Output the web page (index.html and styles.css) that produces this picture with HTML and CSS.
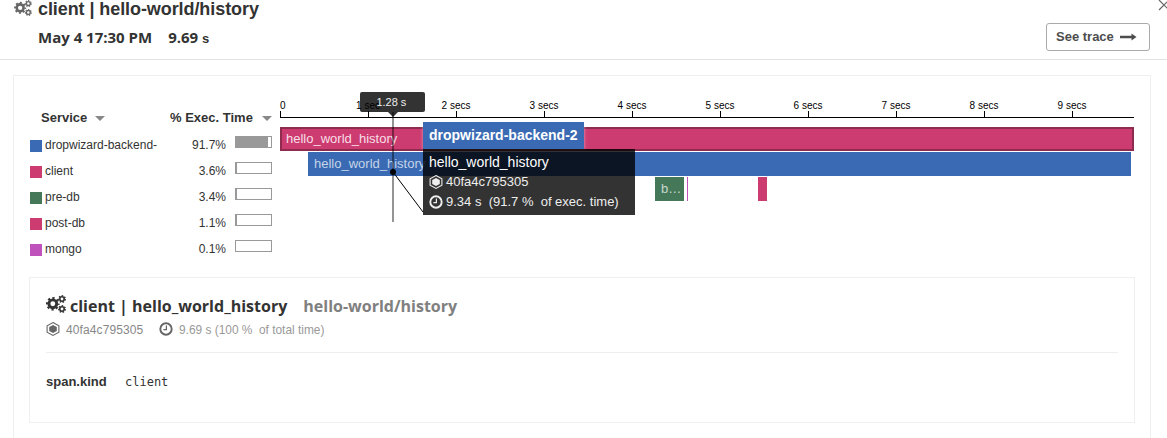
FILE: index.html
```html
<!DOCTYPE html>
<html lang="en">
<head>
<meta charset="utf-8">
<title>client | hello-world/history</title>
<link rel="stylesheet" href="styles.css">
</head>
<body>
<svg class="defs" width="0" height="0">
  <symbol id="gears" viewBox="0 0 20 18">
    <g fill="none" stroke="currentColor">
      <circle cx="6.8" cy="8.8" r="3.9" stroke-width="2.9"/>
      <circle cx="6.8" cy="8.8" r="5.8" stroke-width="2" stroke-dasharray="2.3 2.255" stroke-dashoffset="1.15"/>
      <circle cx="16" cy="4" r="2.2" stroke-width="1.6"/>
      <circle cx="16" cy="4" r="3.3" stroke-width="1.3" stroke-dasharray="1.5 1.462"/>
      <circle cx="16" cy="14" r="2.2" stroke-width="1.6"/>
      <circle cx="16" cy="14" r="3.3" stroke-width="1.3" stroke-dasharray="1.5 1.462"/>
    </g>
  </symbol>
  <symbol id="host" viewBox="0 0 14 14">
    <path d="M7 .6 12.9 3.8v6.4L7 13.4 1.1 10.2V3.8Z" fill="none" stroke="currentColor" stroke-width="1.1"/>
    <path d="M7 2.9 10.8 5v4L7 11.1 3.2 9V5Z" fill="currentColor"/>
  </symbol>
  <symbol id="clock" viewBox="0 0 14 14">
    <circle cx="7" cy="7" r="5.7" fill="none" stroke="currentColor" stroke-width="1.9"/>
    <path d="M7.4 3.6v4H4.4" fill="none" stroke="currentColor" stroke-width="1.2"/>
  </symbol>
</svg>

<header class="header">
  <svg class="header-icon"><use href="#gears"/></svg>
  <div class="header-text">
    <h1 class="title">client | hello-world/history</h1>
    <div class="subtitle"><span class="date">May 4 17:30 PM</span><span class="total">9.69 <small>s</small></span></div>
  </div>
  <button class="trace-button"><span>See trace</span>
    <svg width="17" height="8" viewBox="0 0 17 8"><path d="M0 2.8h11.5V.5L16.5 4l-5 3.5V5.2H0Z" fill="currentColor"/></svg>
  </button>
  <svg class="close" viewBox="0 0 12 12"><path d="M1 1 11 11M11 1 1 11" stroke="currentColor" stroke-width="1.2"/></svg>
</header>

<main class="panel">
  <div class="overview">
    <section class="services">
      <div class="service-head"><span class="col-name">Service</span><i class="caret"></i><span class="col-time">% Exec. Time</span><i class="caret"></i></div>
      <div class="service"><i class="swatch blue"></i><span class="name">dropwizard-backend-</span><span class="pct">91.7%</span><span class="meter"><i style="width:92%"></i></span></div>
      <div class="service"><i class="swatch pink"></i><span class="name">client</span><span class="pct">3.6%</span><span class="meter"><i style="width:3.6%"></i></span></div>
      <div class="service"><i class="swatch green"></i><span class="name">pre-db</span><span class="pct">3.4%</span><span class="meter"><i style="width:3.4%"></i></span></div>
      <div class="service"><i class="swatch pink"></i><span class="name">post-db</span><span class="pct">1.1%</span><span class="meter"><i style="width:1.1%"></i></span></div>
      <div class="service"><i class="swatch purple"></i><span class="name">mongo</span><span class="pct">0.1%</span><span class="meter"><i style="width:0.1%"></i></span></div>
    </section>

    <section class="chart">
      <div class="axis">
        <div class="tick"><span>0</span></div><div class="tick"><span>1 sec</span></div><div class="tick"><span>2 secs</span></div><div class="tick"><span>3 secs</span></div><div class="tick"><span>4 secs</span></div><div class="tick"><span>5 secs</span></div><div class="tick"><span>6 secs</span></div><div class="tick"><span>7 secs</span></div><div class="tick"><span>8 secs</span></div><div class="tick"><span>9 secs</span></div>
      </div>
      <div class="row"><div class="span pink selected">hello_world_history</div></div>
      <div class="row row-backend"><div class="span blue">hello_world_history</div></div>
      <div class="row row-db"><div class="span green pre">b…</div><div class="span purple mongo"></div><div class="span pink post"></div></div>

      <div class="cursor-line"></div>
      <div class="cursor-label">1.28 s</div>
      <svg class="pointer" width="36" height="48"><path d="M4 4 34 44" stroke="#000"/><circle cx="4" cy="4" r="3"/></svg>
      <div class="tooltip">
        <div class="tip-service">dropwizard-backend-2</div>
        <div class="tip-body">
          <div class="tip-name">hello_world_history</div>
          <div class="tip-line"><svg class="icon"><use href="#host"/></svg><span class="tip-host">40fa4c795305</span></div>
          <div class="tip-line"><svg class="icon"><use href="#clock"/></svg><span class="tip-time">9.34 s&nbsp; (91.7 %&nbsp; of exec. time)</span></div>
        </div>
      </div>
    </section>
  </div>

  <section class="detail">
    <div class="detail-head"><svg class="detail-icon"><use href="#gears"/></svg><h2 class="detail-title">client | hello_world_history</h2><span class="resource">hello-world/history</span></div>
    <div class="meta"><svg class="icon"><use href="#host"/></svg><span class="meta-host">40fa4c795305</span><svg class="icon"><use href="#clock"/></svg><span class="meta-time">9.69 s (100 %&nbsp; of total time)</span></div>
    <div class="tags"><b class="tag-key">span.kind</b><code class="tag-value">client</code></div>
  </section>
</main>
</body>
</html>
```
FILE: styles.css
```css
* { box-sizing: border-box; }
body { margin: 0; height: 438px; overflow: hidden; background: #fff; color: #333; font: 13px/16px "Liberation Sans", Arial, sans-serif; }
.defs { position: absolute; }
svg { flex: none; display: block; }

.header { height: 60px; border-bottom: 1px solid #e2e2e2; display: flex; align-items: flex-start; overflow: hidden; }
.header-icon { width: 18px; height: 16px; margin: 0 6px 0 14px; color: #666; }
.header-text { flex: 1; white-space: nowrap; }
.title { margin: -2px 0 0; font-size: 18px; line-height: 22px; font-weight: bold; letter-spacing: -0.08px; }
.subtitle { margin-top: 7px; display: flex; gap: 16px; font: bold 15px/20px "Open Sans", sans-serif; }
.subtitle small { font: bold 13px "Liberation Sans", Arial, sans-serif; }
.trace-button { margin: 23px 8px 0 0; width: 104px; height: 28px; padding: 0 0 1px 9px; display: flex; align-items: center; gap: 6px; border: 1px solid #aaa; border-radius: 3px; background: #fff; color: #4d4d4d; font: bold 13px/16px "Liberation Sans", Arial, sans-serif; white-space: nowrap; }
.close { width: 12px; height: 12px; margin: -1px -3px 0 0; color: #666; }

.panel { margin: 15px 16px 0 13px; height: 380px; border: 1px solid #efefef; padding: 0 15px; }
.overview { display: flex; height: 201px; }
.services { width: 251px; padding: 33px 8px 0 1px; }
.service-head { display: flex; align-items: center; height: 18px; margin-bottom: 5px; padding-left: 11px; font-weight: bold; white-space: nowrap; }
.col-name { width: 54px; }
.col-time { width: 92px; margin-left: 65px; }
.caret { border: 5px solid transparent; border-top-color: #888; border-bottom: 0; }
.service { display: flex; align-items: center; height: 26px; font-size: 12px; }
.swatch { width: 12px; height: 12px; margin-right: 3px; margin-top: 1px; }
.name { width: 111px; white-space: nowrap; }
.pct { width: 70px; text-align: right; margin-right: 9px; }
.meter { width: 37px; height: 12px; margin-top: -7px; border: 1px solid #999; }
.meter i { display: block; height: 10px; background: #999; }

.blue { background: #396ab3; }
.pink { background: #cd3c70; }
.green { background: #447859; }
.purple { background: #bf53bb; }

.chart { position: relative; width: 854px; padding-top: 22px; }
.axis { display: grid; grid-template-columns: repeat(9, 88px) 1fr; height: 20px; margin-bottom: 9px; border-bottom: 1px solid #000; font-size: 10px; line-height: 16px; color: #000; }
.tick { display: flex; flex-direction: column; align-items: flex-start; }
.tick span { white-space: nowrap; transform: translateX(-50%); height: 13px; }
.tick:first-child span { transform: none; }
.tick::after { content: ""; width: 1px; height: 6px; background: #000; }
.row { display: flex; height: 24px; margin-bottom: 1px; }
.row-backend { padding: 0 3px 0 28px; }
.row-db { padding-left: 375px; }
.span { height: 24px; line-height: 24px; padding-left: 6px; color: rgba(255,255,255,.72); white-space: nowrap; }
.row:not(.row-db) .span { flex: 1; }
.selected { border: 2px solid #8e2b4f; line-height: 20px; padding-left: 4px; color: #f7dfe8; }
.pre { width: 29px; margin-right: 3px; }
.mongo { width: 1px; padding: 0; margin-right: 70px; }
.post { width: 9px; padding: 0; }

/* Hover cursor and tooltip drawn over the timeline */
.cursor-line { position: absolute; left: 112px; top: 36px; width: 2px; height: 110px; background: rgba(0,0,0,.42); }
.cursor-label { position: absolute; left: 80.4px; top: 16px; width: 65px; height: 20px; border-radius: 2px; background: rgba(0,0,0,.8); color: #eee; font-size: 11px; line-height: 20px; text-align: center; padding-right: 3px; }
.cursor-label::after { content: ""; position: absolute; left: 27.6px; top: 20px; border: 5px solid transparent; border-top-color: rgba(0,0,0,.8); border-bottom: 0; }
.pointer { position: absolute; left: 109px; top: 92px; }
.tooltip { position: absolute; left: 143px; top: 46px; width: 212px; color: #fff; white-space: nowrap; }
.tip-service { width: 161px; height: 27px; padding-left: 6px; background: #396ab3; font-size: 14px; line-height: 26px; font-weight: bold; box-shadow: 0 0 3px rgba(255,255,255,.5); }
.tip-body { position: relative; height: 66px; padding: 3px 6px; background: rgba(0,0,0,.8); }
.tip-name { height: 20px; font-size: 14px; line-height: 20px; }
.tip-line { display: flex; align-items: center; height: 20px; gap: 3px; color: #eee; }
.icon { width: 14px; height: 14px; }

.detail { height: 146px; border: 1px solid #efefef; padding: 16px 16px 0; white-space: nowrap; }
.detail-head { display: flex; height: 24px; font: bold 16px/24px "Open Sans", sans-serif; }
.detail-icon { width: 20px; height: 18px; margin: 1px 4px 0 0; }
.detail-title { margin: 0 16px 0 0; font: inherit; }
.resource { color: #808080; }
.meta { display: flex; align-items: center; height: 35px; padding-bottom: 11px; border-bottom: 1px solid #eee; color: #888; font-size: 12px; }
.meta .icon { color: #666; margin: -1px 6px 0 0; }
.meta-host { width: 77px; margin-right: 16px; letter-spacing: 0.1px; }
.meta-time { font-size: 11.9px; color: #999; }
.tags { display: flex; align-items: center; margin-top: 20px; height: 18px; }
.tag-key { width: 79px; }
.tag-value { font: 12px/16px "DejaVu Sans Mono", monospace; }
```
